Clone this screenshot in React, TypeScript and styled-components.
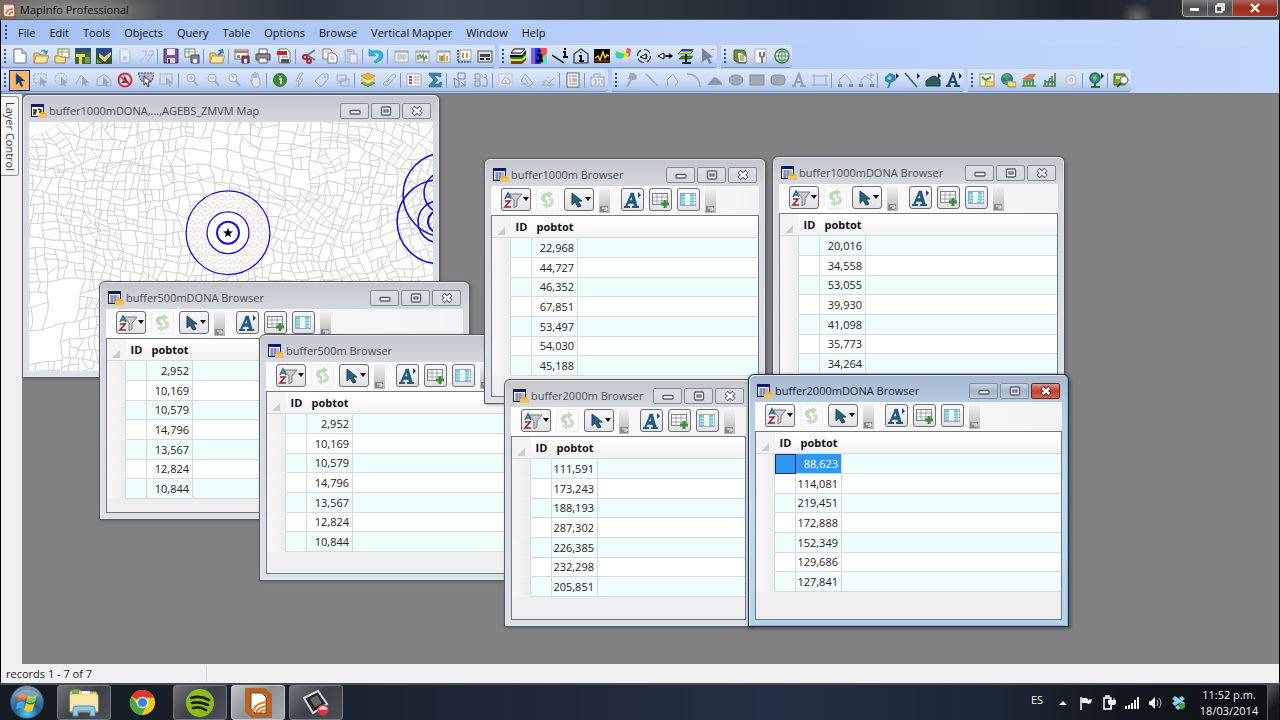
import React from "react";
import styled, { createGlobalStyle, css } from "styled-components";

const GlobalStyle = createGlobalStyle`
  * { box-sizing: border-box; }
  html, body { margin: 0; padding: 0; background: #000; }
  body, button { font-family: "Open Sans", "Noto Sans", sans-serif; font-size: 11px; line-height: 16px; }
  button { margin: 0; padding: 0; border: 0; background: none; color: inherit; }
  svg { display: block; flex: none; }
`;

/* ---------- icons ---------- */

const G = "#9fa8b8";
const doc = <path d="M3 1h7l3 3v11H3z" fill="#fff" stroke="#8a8f98" />;
const folder = (
  <>
    <path d="M1 5h5l1 2h7v8H1z" fill="#e8c766" stroke="#b08d35" />
    <path d="M3 8h13l-3 7H1z" fill="#fbe9a5" stroke="#b9993f" />
  </>
);
const ghost = (d: string) => <path d={d} fill="none" stroke={G} />;
const pointer = (c: string) => <path d="M7 5v9l2-2 2 3 1-1-1-3h3z" fill={c} />;
const lens = (
  <>
    <circle cx="7" cy="6" r="4" fill="#e4ebf7" stroke={G} />
    <path d="M10 9l4 5" stroke={G} strokeWidth="2" />
  </>
);
const sheet = (
  <>
    <rect x="2" y="3" width="13" height="11" fill="#fff" stroke="#9aa3b0" />
    <path d="M2 4h13" stroke="#6f86ad" />
  </>
);
const flyout = <path d="M13 1v6l3-3z" fill="#12205c" />;

const icons: Record<string, React.ReactNode> = {
  new: <><path d="M2 1h8l4 4v10H2z" fill="#fff" stroke="#6d7178" /><path d="M10 1v4h4" fill="#dfe3ea" stroke="#6d7178" /></>,
  open: <>{folder}<path d="M8 3q3-3 5 0l2-1-1 4-4-1 2-1q-2-2-4 0z" fill="#2e8bd0" /></>,
  openTable: <><rect x="4" y="1" width="11" height="9" fill="#f4f6e8" stroke="#7b8a55" /><path d="M4 4h11M8 1v9" stroke="#8fa864" /><path d="M1 8h5l1 1h5l-1 6H1z" fill="#f3dc84" stroke="#a58a36" /></>,
  mapGreen: <><rect width="16" height="16" fill="#3b6b35" /><path d="M0 0h16v4H0z" fill="#2b4f86" /><path d="M1 6h9v3H7v7H4V9H1z" fill="#e8da5d" /><path d="M10 9h5v6h-5z" fill="#7d9c46" /></>,
  mapEarth: <><rect width="16" height="16" fill="#31543a" /><path d="M0 0h16v5L8 9 0 5z" fill="#2b4a86" /><path d="M3 5l5 4 7-5v3l-6 7-6-5z" fill="#dfd07c" /><path d="M1 11l5 4H1z" fill="#79a14a" /></>,
  ghostDoc: <g opacity=".4">{doc}<circle cx="8" cy="10" r="2" fill={G} /></g>,
  ghostTools: <g opacity=".7">{ghost("M2 14l6-7M9 14l5-7M4 3h4v4M11 3h4v4H9")}</g>,
  save: <><path d="M1 1h14v14H1z" fill="#7d5596" stroke="#4e2f66" /><rect x="4" y="1" width="8" height="6" fill="#f2f0f6" /><rect x="4" y="10" width="8" height="5" fill="#d9d2e2" /><rect x="5" y="11" width="2" height="4" fill="#4e2f66" /></>,
  saveTable: <><rect x="1" y="1" width="10" height="8" fill="#fff" stroke="#757d8c" /><path d="M1 4h10M5 1v8" stroke="#85a15e" /><path d="M7 7h8v8H7z" fill="#7b8292" stroke="#444b5b" /><rect x="9" y="11" width="4" height="4" fill="#fff" /></>,
  close: <>{folder}<path d="M9 2l5-1 1 5-2-1-3 3-1-2 2-2z" fill="#2e7fc0" /></>,
  saveWin: <><rect x="1" y="2" width="13" height="9" fill="#fff" stroke="#666c78" /><path d="M1 4h13" stroke="#b3764b" strokeWidth="2" /><path d="M3 7h3v3H3z" fill="#7f9c5a" /><path d="M8 8h7v7H8z" fill="#8c3d62" stroke="#4b2440" /><rect x="10" y="11" width="3" height="4" fill="#fff" /></>,
  print: <><path d="M4 1h8v5H4z" fill="#fff" stroke="#555" /><path d="M1 6h14v6H1z" fill="#8a8e94" stroke="#3f4247" /><path d="M4 10h8v5H4z" fill="#fff" stroke="#555" /></>,
  pdf: <><path d="M3 1h8l3 3v11H3z" fill="#fff" stroke="#777" /><path d="M1 3h10v4H1z" fill="#c5262d" /><path d="M5 11h8v4H5z" fill="#555" /><path d="M6 9h6" stroke="#777" /></>,
  cut: <><path d="M5 8l9-6M6 7l8 5" stroke="#777" strokeWidth="2" /><circle cx="4" cy="9" r="2" fill="none" stroke="#a02830" strokeWidth="2" /><circle cx="8" cy="13" r="2" fill="none" stroke="#a02830" strokeWidth="2" /></>,
  copy: <><path d="M1 1h7l2 2v8H1z" fill="#fff" stroke="#777" /><path d="M6 5h6l3 3v7H6z" fill="#fff" stroke="#777" /><path d="M8 9h4M8 11h5M3 4h4" stroke="#aaa" /></>,
  paste: <g opacity=".75"><path d="M2 2h9v12H2z" fill="#c3c9d5" stroke={G} /><path d="M7 6h7v9H7z" fill="#f0f2f7" stroke={G} /><path d="M4 1h5v3H4z" fill={G} /></g>,
  undo: <path d="M1 1v7h7L5 5q7-1 6 3t-5 5l1 2q8-2 8-8T4 3z" fill="#2bb4e0" stroke="#1689b5" strokeWidth=".5" />,
  browser: <>{sheet}<path d="M4 7h9M4 9h9M4 11h9" stroke="#8f97a6" /></>,
  mapWin: <>{sheet}<path d="M4 12V8l2-1 1 3 2-3 1 5 2-4 1 3" fill="none" stroke="#5f9a50" strokeWidth="1.600" /></>,
  graph: <>{sheet}<path d="M5 13V7M9 13V6M12 13V8" stroke="#e2a251" strokeWidth="2" /><path d="M7 13V8" stroke="#6aa84c" strokeWidth="2" /></>,
  layout: <><path d="M2 2v12M2 14h13" stroke="#3f6fae" strokeDasharray="2 1" strokeWidth="2" /><rect x="4" y="2" width="11" height="10" fill="#fff" stroke="#8aa" /><path d="M7 5v5M11 5v5" stroke="#e29031" strokeWidth="2" /></>,
  redistrict: <><rect x="1" y="3" width="14" height="11" fill="#ddd" stroke="#555" /><path d="M3 6h10v3H3z" fill="#444" /><path d="M3 11h4M9 11h4" stroke="#222" strokeWidth="2" /></>,
  vmLayers: <><path d="M4 1h11l-4 4H1z" fill="#fff" stroke="#000" /><path d="M0 7h12l4-5v4l-4 4H0z" fill="#111" /><path d="M1 9h11l4-4v3l-4 3H1z" fill="#138a2e" /><path d="M0 11h12l4-4v3l-4 3H0z" fill="#f1e21c" /><path d="M1 13h11l4-3v2l-4 4H1z" fill="#7b3a18" /></>,
  vmInfo: <><rect width="5" height="16" fill="#8a5fd8" /><rect x="4" width="6" height="16" fill="#1836e8" /><path d="M9 0h7v8l-7 8z" fill="#f4505a" /><path d="M12 9l4-4v11h-6z" fill="#5fe2c0" /><path d="M7 3h3M6 7h4v6M5 13h7" stroke="#000" strokeWidth="2.4" fill="none" /></>,
  vmLine: <><path d="M0 7l12 8" stroke="#111" strokeWidth="1.5" /><path d="M12 1h2M11 4h2v5M11 9h5" stroke="#000" strokeWidth="2" fill="none" /></>,
  vmRegion: <><path d="M1 15V6l7-5 7 5v9z" fill="none" stroke="#333" strokeWidth="1.2" /><path d="M8 4v1M6 8h2v5M6 13h5" stroke="#000" strokeWidth="2" fill="none" /></>,
  vmProfile: <><rect y="1" width="16" height="14" fill="#0b0b0b" /><path d="M1 10l3-2 2 4 3-8 2 6 2-3 2 1" fill="none" stroke="#f2dd20" strokeWidth="1.4" /><path d="M1 13h14" stroke="#e33" /></>,
  vmRamp: <><path d="M12 0l4 1-1 7-5 1z" fill="#f25555" /><path d="M8 3l6 3-3 4-6-2z" fill="#f6e320" /><path d="M1 3l9 3-2 4-8-3z" fill="#45dd6b" /><path d="M1 6l7 3-1 2-6-1z" fill="#2ac9f0" /><path d="M5 11l8-1-1 4z" fill="#f0d0d8" /></>,
  vmRotate: <><circle cx="8" cy="8" r="6.5" fill="none" stroke="#333" strokeDasharray="7 3" strokeWidth="1.2" /><path d="M4 9l6-3v5zM10 6q2 2 0 5" fill="#fff" stroke="#111" /></>,
  vmView: <><path d="M1 8l6-3v6z" fill="#fff" stroke="#000" /><path d="M8 8h6" stroke="#000" strokeWidth="2" /><path d="M12 5l4 3-4 3z" fill="#000" /></>,
  vm3d: <><path d="M4 1h12l-4 4H1z" fill="#2741c8" /><path d="M3 3h12l-3 3H0z" fill="#d8e032" stroke="#111" strokeWidth=".5" /><path d="M4 8h11l-3 3H1z" fill="#189d3a" stroke="#111" strokeWidth=".5" /><path d="M8 6v8M4 15h9" stroke="#222" strokeWidth="2" /></>,
  vmSelect: <><path d="M3 0l11 9-4 1 3 5-3 1-2-5-5 3z" fill="#7c8394" /><path d="M12 2l3-1M1 13l3 2" stroke="#9aa" /></>,
  scroll: <><path d="M2 2h8q4 0 4 4v9H6l-4-3z" fill="#6b8b4a" stroke="#41602c" /><path d="M6 5h3l5 4v5H7z" fill="#f3eecb" /><path d="M8 8h4M8 10h4M8 12h4" stroke="#777" /></>,
  options: <><path d="M2 1h11v14H2z" fill="#fbfbfb" stroke="#a3abb8" /><path d="M7 4v4q2 2 4 0V4M9 8v7" stroke="#777" strokeWidth="2" fill="none" /></>,
  globe: <><circle cx="8" cy="8" r="7" fill="#eaf5ea" stroke="#4a7b5c" strokeWidth="1.5" /><path d="M1 8h14M8 1v14M3 4h10M3 12h10M8 1q-7 7 0 14M8 1q7 7 0 14" stroke="#4a8a5e" fill="none" /></>,
  select: <path d="M4 1v12l3-3 2 5 2-1-2-5h4z" fill="#1b3c6b" stroke="#46688c" strokeWidth=".5" />,
  marquee: <><rect x="1" y="2" width="12" height="9" fill="none" stroke={G} strokeDasharray="2 1" />{pointer(G)}</>,
  radius: <><circle cx="7" cy="7" r="6" fill="none" stroke={G} strokeDasharray="2 1" />{pointer(G)}</>,
  polySel: <>{ghost("M1 12l5-9 8 8")}{pointer(G)}</>,
  boundSel: <>{ghost("M1 13V7l7-5 7 6v6z")}{pointer(G)}</>,
  unselect: <><circle cx="8" cy="8" r="6.5" fill="#e9d5dc" stroke="#cf2f3b" strokeWidth="2" /><path d="M7 3v5l-3 3h8l-2-3z" fill="#3a3f4b" /><path d="M3 4l10 9" stroke="#cf2f3b" strokeWidth="1.6" /></>,
  invert: <><path d="M0 1h16l-2 8H3z" fill="#aeb3bd" stroke="#444" strokeDasharray="2 1" /><path d="M6 4v9l2-2 2 4 1-1-1-4h3z" fill="#fff" stroke="#333" /></>,
  graphSel: <g opacity=".8"><rect x="1" y="2" width="12" height="10" fill="#d6deec" stroke={G} />{pointer(G)}</g>,
  zoomIn: <>{lens}<path d="M5 6h4M7 4v4" stroke={G} /></>,
  zoomOut: <>{lens}<path d="M5 6h4" stroke={G} /></>,
  zoomQ: <>{lens}<path d="M6 5q1-2 2 0l-1 2" stroke={G} fill="none" /></>,
  pan: <path d="M3 8l2 1V3q1-2 2 0v3-5q1-1 2 0v5-4q1-1 2 0v4q2-1 2 1v5l-2 3H7z" fill="#dfe4ee" stroke={G} />,
  info: <><circle cx="8" cy="8" r="6.5" fill="#3c8a35" stroke="#3f6f3a" /><path d="M8 4v1M7 7h2v5" stroke="#fff" strokeWidth="1.6" fill="none" /></>,
  hotlink: <>{ghost("M10 1L6 7h4l-5 8 1-6H3l4-8z")}</>,
  label: <>{ghost("M1 9l7-7h6v5l-7 8z")}<circle cx="11" cy="5" r="1" fill={G} /></>,
  drag: <>{ghost("M2 3h9v6H2zM6 7h8v7H6zM2 12l3-2")}</>,
  layers: <><path d="M1 11l7-3 7 3-7 4z" fill="#7cae3d" stroke="#4d7c26" strokeWidth=".6" /><path d="M1 8l7-3 7 3-7 4z" fill="#f3e9a0" stroke="#b7a14a" strokeWidth=".6" /><path d="M1 4l7-3 7 3-7 4z" fill="#f0b23a" stroke="#b47a1c" strokeWidth=".6" /></>,
  ruler: <>{ghost("M2 12L11 3q3-2 4 1L7 13q-3 2-5-1zM6 10l3-3")}</>,
  legend: <><rect x="1" y="2" width="14" height="12" fill="#fff" stroke="#a3abb8" /><path d="M3 5h3M3 8h3M3 11h3" stroke="#cf3a3a" strokeWidth="2" /><path d="M8 5h6M8 8h6M8 11h6" stroke="#999" /></>,
  sigma: <path d="M2 1h12v4h-2l-1-1H7l4 4-4 4h5l1-2h2l-1 5H2v-2l5-5-5-5z" fill="#3a86a4" stroke="#2b6480" strokeWidth=".5" />,
  target: <g stroke="#7f8796" fill="none"><path d="M6 1h7v6H6zM2 6l5 3v6H3zM9 10l4 4M13 9v5H9" /></g>,
  assign: <g stroke="#8a92a2" fill="none"><path d="M2 2h5v5H2zM2 9h5v5H2zM9 4l5 3v7H9M12 2l2 2-2 2" /></g>,
  clip: <><rect x="1" y="2" width="13" height="12" fill="#e3e9f3" stroke="#c3c9d6" />{ghost("M3 11l4-6 5 3v4zM7 8l2 4")}</>,
  clipOn: <>{ghost("M2 9l4-7 8 9-5 4zM6 6l3 6M2 12h5")}</>,
  nodes: <>{ghost("M1 13h14M3 13l3-5 3 3 5-5M3 9v2M8 5v1")}</>,
  list: <><rect x="2" y="1" width="12" height="14" fill="#fff" stroke="#5c626c" /><path d="M4 4h2M4 7h2M4 9h2M4 12h2M7 4h5M7 7h5M7 9h5M7 12h5" stroke="#6c727c" /></>,
  district: <><rect x="1" y="5" width="13" height="9" fill="#dde2ec" stroke={G} /><path d="M4 5V2h6v3M4 8h2v4H4M8 8h2M8 12h2M12 8v4" stroke={G} fill="none" /></>,
  symbol: <path d="M7 1h4l3 3-1 4H9l-4 7-2-1 4-7H5z" fill={G} />,
  line: <path d="M2 2l12 12" stroke={G} strokeWidth="1.6" />,
  polyline: <>{ghost("M3 14l-1-6 6-6 5 8-3 4")}</>,
  arc: <path d="M1 2q12 0 13 13" fill="none" stroke={G} strokeWidth="1.6" />,
  polygon: <path d="M1 12l6-7 3 1 5 5v2H1z" fill="#9299a6" />,
  ellipse: <ellipse cx="8" cy="8" rx="7" ry="5" fill="#a3a9b5" stroke="#878e9b" />,
  rect: <rect x="1" y="3" width="14" height="10" fill="#a3a9b5" stroke="#878e9b" />,
  rrect: <rect x="1" y="3" width="14" height="10" rx="4" fill="#a3a9b5" stroke="#878e9b" />,
  text: <path d="M1 14h4M9 14h6M3 14L8 2l4 12M5 10h5" stroke="#97a0af" strokeWidth="2" fill="none" />,
  frame: <>{ghost("M2 2v12M14 2v12M0 4h16M0 13h16")}</>,
  reshape: <>{ghost("M3 13L2 8l6-6 6 7v4")}<path d="M1 12h4v3H1zM12 12h4v3h-4z" fill="#8f8a84" /></>,
  addNode: <>{ghost("M3 13L3 8l4-4 7 5v4M9 3h7M13 1v5")}<path d="M1 12h4v3H1zM12 12h4v3h-4z" fill="#8f8a84" /></>,
  symStyle: <><path d="M2 5l5-4 5 2 1 5-5 3-2 5H4l2-5-4-2z" fill="#2f86a5" /><path d="M4 6q3-4 5 0-3 4-5 0" fill="#8fd0e2" />{flyout}</>,
  lineStyle: <><path d="M1 1l12 14" stroke="#45627a" strokeWidth="1.8" />{flyout}</>,
  regStyle: <><path d="M1 9l5-4 4-1 5 4v6H1z" fill="#2d5f57" stroke="#1c403e" />{flyout}</>,
  textStyle: <><path d="M0 14h5M8 14h6M2 14L7 2l4 12M4 10h6" stroke="#1d4d66" strokeWidth="2.2" fill="none" />{flyout}</>,
  wms: <><rect x="1" y="2" width="14" height="12" fill="#f3f4dc" stroke="#8ca07a" /><path d="M3 5l4 3 5-3" stroke="#3c8a35" strokeWidth="2" fill="none" /><path d="M6 9h3l1 1h5v4H7z" fill="#f0d968" stroke="#b8a040" /></>,
  wfs: <><circle cx="7" cy="7" r="6" fill="#2c77b8" /><path d="M2 4q5-5 9 0l-4 4zM3 9l5 1-2 3z" fill="#56a83a" /><path d="M7 9h4l1 1h4v5H8z" fill="#f0e27a" stroke="#8f8a3c" /></>,
  universe: <><path d="M1 7l7-5h7l-4 6H4z" fill="#d9794d" /><path d="M3 9v5M6 9v5M9 9v5M12 7v7M1 14h14M2 9h11" stroke="#4a8a42" strokeWidth="1.6" /></>,
  grid3: <path d="M1 14h13M3 13V8M6 13l2-7M10 13V4M13 13V1M3 10h10" stroke="#4f7a45" strokeWidth="1.6" fill="none" />,
  gear: <><circle cx="8" cy="8" r="5" fill="#e9edf4" stroke="#c2c9d6" strokeWidth="2" /><circle cx="8" cy="8" r="2" fill="#fff" stroke={G} /></>,
  geoGlobe: <><circle cx="7" cy="6" r="5" fill="#2c88ac" stroke="#2c6b5c" strokeWidth="1.5" /><path d="M4 4l4-1 1 4-3 2z" fill="#7dc04a" /><path d="M7 11v3M3 15h9" stroke="#2c6b2c" strokeWidth="2" />{flyout}</>,
  findMap: <><path d="M1 2h11v11H1z" fill="#7aa53a" stroke="#42641f" /><path d="M3 4h7v3H3z" fill="#dfe9a5" /><circle cx="11" cy="8" r="4" fill="#f1f1ea" stroke="#666" /><path d="M8 11l-4 4" stroke="#444" strokeWidth="2" /></>,
};

const Icon = ({ name }: { name: string }) => (
  <svg width="16" height="16" viewBox="0 0 16 16" aria-hidden="true">{icons[name]}</svg>
);

/* ---------- application frame ---------- */

const Shell = styled.div`
  display: flex;
  flex-direction: column;
  min-height: 100vh;
  overflow: hidden;
  padding: 0 1px;
`;

const TitleBar = styled.header`
  display: flex;
  align-items: flex-start;
  justify-content: space-between;
  height: 20px;
  margin: 0 -1px;
  border-bottom: 1px solid #4d545e;
  background:
    radial-gradient(ellipse 90px 24px at 70px 12px, rgba(150, 147, 144, 0.9), rgba(130, 128, 126, 0.6) 60%, transparent),
    radial-gradient(circle 16px at 1137px 18px, #6f6a66, transparent),
    linear-gradient(90deg, #6a6764, #4b4e53 12%, #2b333e 24%, #3b444e 34%, #28303a 55%, #1d2531 66%, #2f353d 76%, #1c222c 84%, #3a3c40);
`;

const AppName = styled.div`
  display: flex;
  align-items: center;
  gap: 4px;
  padding: 2px 0 0 2px;
  color: #0c0c0e;
  text-shadow: 0 0 6px rgba(190, 186, 180, 0.9);
`;

const FrameButtons = styled.div`
  display: flex;
  margin-right: 2px;
  border: 1px solid #a9abae;
  border-top: 0;
  border-radius: 0 0 4px 4px;
  overflow: hidden;
`;

const FrameButton = styled.button<{ $danger?: boolean }>`
  display: grid;
  place-items: center;
  width: ${(p) => (p.$danger ? 44 : 25)}px;
  height: 16px;
  border-right: ${(p) => (p.$danger ? 0 : 1)}px solid #8d8f92;
  background: ${(p) => (p.$danger ? "linear-gradient(#a8665c, #9c2a1c 50%, #a93a28)" : "linear-gradient(#7b7c7e, #4a4b4e 50%, #5f6063)")};
`;

const MenuBar = styled.nav`
  display: flex;
  align-items: center;
  height: 25px;
  padding: 0 0 0 4px;
  gap: 2px;
  background: linear-gradient(90deg, #a5c0f2, #b4ccf8 40%, #c4d8fb);
`;

const MenuItem = styled.button`
  padding: 0 6px;
  color: #0c1220;
`;

const ToolArea = styled.div`
  background: linear-gradient(90deg, #a8c1f0, #b6cdf8 50%, #c3d7fb);
  border-bottom: 1px solid #6b7686;
`;

const ToolRow = styled.div`
  display: flex;
  height: 24px;
  gap: 4px;
`;

const ToolGroup = styled.div`
  display: flex;
  align-items: center;
  height: 23px;
  padding: 0 0 0 3px;
  border-radius: 0 3px 3px 0;
  border-bottom: 1px solid #7e95c2;
  background: linear-gradient(#dbe7fb, #cddcf7 55%, #aac1ea);
`;

const Grip = styled.span`
  width: 2px;
  height: 15px;
  margin-right: 3px;
  background: repeating-linear-gradient(#2c4a86 0 2px, transparent 2px 4px);
`;

const ToolButton = styled.button<{ $active?: boolean }>`
  display: grid;
  place-items: center;
  width: 21px;
  height: 21px;
  ${(p) => p.$active && css`
    border: 1px solid #1b2a66;
    background: #fbb765;
  `}
`;

const ToolSep = styled.span`
  width: 1px;
  height: 15px;
  margin: 0 2px 0 1px;
  background: #7d97ca;
`;

const toolRows: string[][] = [
  [
    "new open openTable mapGreen mapEarth ghostDoc ghostTools | save saveTable | close | saveWin print pdf | cut copy paste | undo | browser mapWin graph layout redistrict",
    "vmLayers vmInfo vmLine vmRegion vmProfile vmRamp vmRotate vmView vm3d vmSelect",
    "scroll options globe",
  ],
  [
    "select marquee radius polySel boundSel unselect invert graphSel | zoomIn zoomOut zoomQ pan | info hotlink label drag | layers ruler | legend sigma | target assign | clip clipOn nodes | list | district",
    "symbol line polyline arc polygon ellipse rect rrect text frame | reshape addNode | symStyle lineStyle regStyle textStyle",
    "wms wfs universe grid3 gear | geoGlobe | findMap",
  ],
];

const menus = ["File", "Edit", "Tools", "Objects", "Query", "Table", "Options", "Browse", "Vertical Mapper", "Window", "Help"];

const Body = styled.main`
  display: flex;
  flex: 1;
  min-height: 570px;
`;

const SideStrip = styled.aside`
  width: 21px;
  flex: none;
  padding-top: 2px;
  background: #f0f0f0;
`;

const SideTab = styled.button`
  width: 18px;
  height: 80px;
  border: 1px solid #8d8f94;
  border-left: 0;
  border-radius: 0 3px 3px 0;
  background: #f6f6f6;
  color: #3b3d42;
  writing-mode: vertical-rl;
`;

const Workspace = styled.section`
  position: relative;
  flex: 1;
  overflow: hidden;
  background: #808183;
`;

/* ---------- document windows ---------- */

interface Place { x: number; y: number; w: number; h: number }

const Win = styled.article<{ $at: Place; $active?: boolean }>`
  position: absolute;
  left: ${(p) => p.$at.x}px;
  top: ${(p) => p.$at.y}px;
  width: ${(p) => p.$at.w}px;
  height: ${(p) => p.$at.h}px;
  display: flex;
  flex-direction: column;
  padding: 0 6px 6px;
  border: 1px solid ${(p) => (p.$active ? "#20303e" : "#55585e")};
  border-radius: 6px 6px 0 0;
  background: ${(p) => p.$active
    ? "linear-gradient(#a9b9cd, #b6cbe2 28px, #c3dcf2 50%, #b4d3ea)"
    : "linear-gradient(#c4c6cc, #d6d9e0 28px, #dae2ec)"};
  box-shadow: ${(p) => (p.$active
    ? "inset 1px 1px 0 #e3eef8, inset -1px -1px 0 #6fc0dc, 1px 1px 3px 1px rgba(40, 42, 45, 0.5)"
    : "inset 0 0 0 1px #e4e7ec, 1px 1px 3px rgba(50, 52, 55, 0.4)")};
`;

const WinTitle = styled.header`
  display: flex;
  align-items: center;
  flex: none;
  height: 27px;
  padding: 4px 2px 0 2px;
  gap: 2px;
`;

const WinName = styled.h2<{ $active?: boolean }>`
  flex: 1;
  margin: 0;
  font-size: 11px;
  line-height: 16px;
  font-weight: 400;
  white-space: nowrap;
  color: ${(p) => (p.$active ? "#1d2632" : "#4a4f58")};
`;

const WinButtons = styled.div`
  display: flex;
  gap: 2px;
`;

const WinButton = styled.button<{ $tone: "plain" | "active" | "danger" }>`
  display: grid;
  place-items: center;
  width: 29px;
  height: 16px;
  border: 1px solid ${(p) => (p.$tone === "danger" ? "#5e2620" : "#858b95")};
  border-radius: 2px;
  background: ${(p) =>
    p.$tone === "danger"
      ? "linear-gradient(#d99a8f, #c2402c 50%, #cf6650)"
      : p.$tone === "active"
      ? "linear-gradient(#c9d6e6, #a4b6cb 50%, #b9cbdd)"
      : "linear-gradient(#dcdfe5, #d3d7de)"};
`;

const WinTools = styled.div`
  display: flex;
  align-items: flex-start;
  flex: none;
  height: 29px;
  padding: 2px 0 0 10px;
  background: linear-gradient(90deg, #fcfcfc, #f3f3f4);
`;

const BarButton = styled.button<{ $wide?: boolean; $off?: boolean }>`
  display: flex;
  align-items: center;
  justify-content: center;
  width: ${(p) => (p.$wide ? 30 : 23)}px;
  height: 23px;
  margin-right: 5px;
  border: 1px solid ${(p) => (p.$off ? "#efefef" : "#6c6e72")};
  border-radius: 3px;
  background: ${(p) => (p.$off ? "#f9f9f9" : "linear-gradient(#f7f7f7, #e2e2e3)")};
`;

const Overflow = styled.button`
  display: flex;
  align-items: flex-end;
  justify-content: center;
  width: 11px;
  height: 25px;
  margin-right: 11px;
  background: linear-gradient(#f3f3f3, #b4b5b7);
`;

const Pane = styled.div`
  flex: 1;
  min-height: 0;
  overflow: hidden;
  border: 1px solid #72777f;
  background: #efefef;
`;

const MapPane = styled.div`
  flex: 1;
  min-height: 0;
  overflow: hidden;
  background: #fff;
`;

const Grid = styled.table`
  width: 100%;
  table-layout: fixed;
  border-collapse: separate;
  border-spacing: 0;
  color: #1f2124;
`;

const HeadCell = styled.th`
  height: 22px;
  padding: 1px 0 0;
  border-bottom: 1px solid #d5dbdd;
  background: linear-gradient(#fff, #f2f2f3);
  color: #101114;
  line-height: 16px;
  font-weight: 700;
  text-align: center;
`;

const Corner = styled(HeadCell)`
  background: #f3f3f3;
  vertical-align: bottom;
`;

const Row = styled.tr`
  height: 20px;
  background: #fff;
  &:nth-child(3n) { height: 19px; }
  &:nth-child(odd) { background: #effdfd; }
`;

const Cell = styled.td<{ $picked?: boolean; $focus?: boolean }>`
  padding: 0 3px 0 0;
  border-right: 1px solid #d3d9dc;
  border-bottom: 1px solid #d3d9dc;
  line-height: 16px;
  text-align: right;
  white-space: nowrap;
  &:last-child { border-right: 0; }
  ${(p) => p.$picked && css`
    background: #3196f4;
    color: #fff;
  `}
  ${(p) => p.$focus && css`
    border: 1px solid #16335c;
  `}
`;

const RowHead = styled(Cell)`
  background: linear-gradient(90deg, #f7f7f7, #ededee);
  border-bottom-color: #f3f3f3;
`;

const WindowIcon = ({ map }: { map?: boolean }) => (
  <svg width="16" height="16" viewBox="0 0 16 16" aria-hidden="true">
    <rect x="0.5" y="1.5" width="12" height="12" fill="#fff" stroke="#1a1f35" />
    <rect x="0" y="1" width="13" height="3" fill="#10186a" />
    {map ? (
      <path d="M2 7h3v2H3v2h2M7 6l3 1v3M8 9h3" fill="none" stroke="#222" strokeWidth="1.5" />
    ) : (
      <path d="M2 6h9M2 8h9M2 10h9M2 12h5M4 5v8M7 5v8" stroke="#5a6ca5" />
    )}
    <path d="M7 12l4-4 5 3v4H7z" fill="#f3a921" />
    <path d="M7 12h9M7 14h9" stroke="#fbdc85" />
  </svg>
);

const MinGlyph = ({ c }: { c: string }) => (
  <svg width="14" height="12" viewBox="0 0 14 12"><rect x="2" y="5.500" width="10" height="3.500" rx="1" fill="#fff" stroke={c} strokeWidth="1.300" /></svg>
);
const MaxGlyph = ({ c }: { c: string }) => (
  <svg width="14" height="12" viewBox="0 0 14 12"><rect x="2.500" y="2" width="9" height="8" rx="1" fill="#fff" stroke={c} strokeWidth="1.300" /><rect x="5" y="5" width="4" height="2" fill="#fff" stroke={c} strokeWidth="1.300" /></svg>
);
const CloseGlyph = ({ c }: { c: string }) => (
  <svg width="14" height="12" viewBox="0 0 14 12">
    <path d="M3 2.500l8 7M11 2.500l-8 7" stroke={c} strokeWidth="4.600" />
    <path d="M3.500 3l7 6M10.500 3l-7 6" stroke="#fff" strokeWidth="2.400" />
  </svg>
);

const WinHeader = ({ title, map, active }: { title: string; map?: boolean; active?: boolean }) => {
  const tone = active ? "active" : "plain";
  return (
    <WinTitle>
      <WindowIcon map={map} />
      <WinName $active={active}>{title}</WinName>
      <WinButtons>
        <WinButton $tone={tone} aria-label="Minimize"><MinGlyph c="#595f69" /></WinButton>
        <WinButton $tone={tone} aria-label="Maximize"><MaxGlyph c="#595f69" /></WinButton>
        <WinButton $tone={active ? "danger" : "plain"} aria-label="Close"><CloseGlyph c={active ? "#6b2a22" : "#595f69"} /></WinButton>
      </WinButtons>
    </WinTitle>
  );
};

const Caret = () => (
  <svg width="6" height="12" viewBox="0 0 6 12" aria-hidden="true"><path d="M0 3h6L3 7z" fill="#111" /></svg>
);

const OverflowMark = () => (
  <svg width="9" height="8" viewBox="0 0 9 8" aria-hidden="true"><path d="M0 1h8v5l-2 1H0z" fill="#85878a" /><path d="M2 3h5v2H4" fill="none" stroke="#fff" /></svg>
);

const BrowserTools = () => (
  <WinTools>
    <BarButton $wide aria-label="Sort and filter">
      <svg width="20" height="18" viewBox="0 0 20 18" aria-hidden="true">
        <path d="M6 3h13l-5 6v6l-3 2V9z" fill="#c9ccd0" stroke="#7a7d82" />
        <path d="M2 8l3-6 3 6M3 6h4" fill="none" stroke="#27667e" strokeWidth="1.500" />
        <path d="M2 10h5l-5 6h6" fill="none" stroke="#8e2a3a" strokeWidth="1.600" />
      </svg>
      <Caret />
    </BarButton>
    <BarButton $off disabled aria-label="Refresh">
      <svg width="17" height="18" viewBox="0 0 17 18" aria-hidden="true">
        <path d="M9 0v2q-7 0-7 5 0 4 6 5V9Q5 8 6 6l3-1v2l5-4z" fill="#bcd8b4" />
        <path d="M8 18v-2q7 0 7-5 0-4-5-5v3q3 1 1 3l-3 1v-2l-5 3z" fill="#cbdcc6" />
      </svg>
    </BarButton>
    <BarButton $wide aria-label="Select">
      <svg width="18" height="18" viewBox="0 0 18 18" aria-hidden="true">
        <path d="M5 2v12l3-3 3 5 3-1-3-5h4z" fill="#2b6076" stroke="#1a3f66" />
      </svg>
      <Caret />
    </BarButton>
    <Overflow aria-label="More"><OverflowMark /></Overflow>
    <BarButton aria-label="Text style">
      <svg width="19" height="18" viewBox="0 0 19 18" aria-hidden="true">
        <path d="M1 16h6M9 16h7M3 16L9 2" fill="none" stroke="#1f5c7e" strokeWidth="2" />
        <path d="M9 2l4 14M5 11h6" fill="none" stroke="#1f5c7e" strokeWidth="3.400" />
        <path d="M15 1v6l3-3z" fill="#1d3fa8" />
      </svg>
    </BarButton>
    <BarButton aria-label="Add row">
      <svg width="19" height="18" viewBox="0 0 19 18" aria-hidden="true">
        <rect x="1.500" y="2.500" width="15" height="11" fill="#fff" stroke="#77808a" />
        <path d="M2 6h15M2 10h15M6 3v11M11 3v11" stroke="#97a3a9" />
        <path d="M14 9v8M10 13h8" stroke="#3f8a3b" strokeWidth="3" />
      </svg>
    </BarButton>
    <BarButton aria-label="Pick fields">
      <svg width="19" height="18" viewBox="0 0 19 18" aria-hidden="true">
        <rect x="1.500" y="2.500" width="15" height="12" fill="#fff" stroke="#97a9b4" />
        <path d="M2 3h4v11H2zM11 3h4v11h-4z" fill="#6fc7dd" />
        <path d="M2 6h15M2 9h15M2 12h15" stroke="#d5e8ee" />
      </svg>
    </BarButton>
    <Overflow aria-label="More"><OverflowMark /></Overflow>
  </WinTools>
);

const MarkCol = styled.col`width: 19px;`;
const IdCol = styled.col`width: 21px;`;
const ValueCol = styled.col`width: 46px;`;

const BrowserWindow = ({ title, at, values, active }: { title: string; at: Place; values: string[]; active?: boolean }) => (
  <Win $at={at} $active={active}>
    <WinHeader title={title} active={active} />
    <BrowserTools />
    <Pane>
      <Grid>
        <colgroup>
          <MarkCol />
          <IdCol />
          <ValueCol />
          <col />
        </colgroup>
        <thead>
          <tr>
            <Corner aria-label="Rows">
              <svg width="16" height="12" viewBox="0 0 16 12"><path d="M13 2v8H5z" fill="#cbccce" /></svg>
            </Corner>
            <HeadCell>ID</HeadCell>
            <HeadCell>pobtot</HeadCell>
            <HeadCell />
          </tr>
        </thead>
        <tbody>
          {values.map((v, i) => (
            <Row key={v}>
              <RowHead />
              <Cell $picked={active && i === 0} $focus={active && i === 0} />
              <Cell $picked={active && i === 0}>{v}</Cell>
              <Cell />
            </Row>
          ))}
        </tbody>
      </Grid>
    </Pane>
  </Win>
);

/* ---------- street map ---------- */

type Pt = [number, number];

const random = (seed: number) => () => {
  seed = (seed * 1664525 + 1013904223) % 4294967296;
  return seed / 4294967296;
};

const area = (p: Pt[]) =>
  Math.abs(p.reduce((s, [x, y], i) => {
    const [nx, ny] = p[(i + 1) % p.length];
    return s + x * ny - nx * y;
  }, 0)) / 2;

const split = (p: Pt[], c: Pt, a: number): [Pt[], Pt[]] => {
  const side = (q: Pt) => (q[0] - c[0]) * Math.sin(a) - (q[1] - c[1]) * Math.cos(a);
  const left: Pt[] = [];
  const right: Pt[] = [];
  p.forEach((q, i) => {
    const n = p[(i + 1) % p.length];
    const s = side(q);
    const t = side(n);
    (s >= 0 ? left : right).push(q);
    if (s >= 0 !== t >= 0) {
      const k = s / (s - t);
      const m: Pt = [q[0] + (n[0] - q[0]) * k, q[1] + (n[1] - q[1]) * k];
      left.push(m);
      right.push(m);
    }
  });
  return [left, right];
};

/* Gentle bends, so that long streets curve as they do in an old city. */
const bend = ([x, y]: Pt): string => {
  const bx = x + 5 * Math.sin(y / 23 + x / 60) + 1.2 * Math.sin(y / 5 + x / 7);
  const by = y + 5 * Math.sin(x / 31 - y / 50) + 1.2 * Math.sin(x / 6 - y / 8);
  return `${bx.toFixed(1)} ${by.toFixed(1)}`;
};

const outline = (p: Pt[]) => {
  const pts: string[] = [];
  p.forEach((q, i) => {
    const n = p[(i + 1) % p.length];
    const steps = Math.max(1, Math.round(Math.hypot(n[0] - q[0], n[1] - q[1]) / 8));
    for (let k = 0; k < steps; k++) pts.push(bend([q[0] + ((n[0] - q[0]) * k) / steps, q[1] + ((n[1] - q[1]) * k) / steps]));
  });
  return "M" + pts.join("L") + "Z";
};

/* City blocks: every district is cut again and again across its longest side. */
const streets = (() => {
  const rnd = random(4211);
  const out: string[] = [];
  const cut = (p: Pt[], depth: number) => {
    const cx = p.reduce((s, q) => s + q[0], 0) / p.length;
    const cy = p.reduce((s, q) => s + q[1], 0) / p.length;
    const target = cx < 52 && cy > 175 && cy < 225 ? 1600 : cx > 170 && cx < 270 && cy < 60 ? 260 : 120;
    if (depth > 13 || area(p) < target * (0.4 + rnd() * 1.7)) {
      out.push(outline(p));
      return;
    }
    let best = 0;
    let angle = 0;
    p.forEach((q, i) => {
      const n = p[(i + 1) % p.length];
      const d = Math.hypot(n[0] - q[0], n[1] - q[1]);
      if (d > best) {
        best = d;
        angle = Math.atan2(n[1] - q[1], n[0] - q[0]);
      }
    });
    const wobble = (rnd() - 0.5) * (depth < 4 ? 0.8 : rnd() < 0.15 ? 1 : 0.06);
    const [l, r] = split(p, [cx + (rnd() - 0.5) * 4, cy + (rnd() - 0.5) * 4], angle + Math.PI / 2 + wobble);
    if (l.length < 3 || r.length < 3) return;
    cut(l, depth + 1);
    cut(r, depth + 1);
  };
  cut([[-20, 30], [120, -60], [440, 10], [430, 270], [180, 300], [-20, 270]], 0);
  return out.join("");
})();

const avenues =
  "M107 0l8 40 3 60 2 60-4 70M128 0l12 40 8 20M60 170q10-60 15-118 15-14 40-8l90 22q60 20 90 10M0 42l50 10 60-16M222 0v24q30 14 70-8 40-6 80 20M330 60l-50 130M405 60l-60 100";

const StreetMap = () => (
  <svg width="100%" height="100%" viewBox="0 0 405 250" preserveAspectRatio="xMinYMin slice" role="img" aria-label="Map of census areas with buffers">
    <defs>
      <pattern id="hatch" width="8" height="8" patternUnits="userSpaceOnUse">
        <path d="M0 1l2 1M4 4l2-1" stroke="#d98f8f" strokeWidth="0.8" />
        <path d="M1 6l2-1M6 7l1-2" stroke="#c9a9d0" strokeWidth="0.8" />
      </pattern>
    </defs>
    <g fill="none" stroke="#c4c4c4" strokeWidth="0.500">
      <path d={streets} />
      <path d={avenues} stroke="#b4b4b4" />
    </g>
    <circle cx="199.500" cy="111" r="42" fill="#fff" fillOpacity="0.75" />
    <circle cx="199.500" cy="111" r="42" fill="url(#hatch)" />
    <circle cx="199.500" cy="111" r="21" fill="#fff" />
    <g fill="none" stroke="#1a12d2" strokeWidth="1.600">
      <circle cx="199.500" cy="111" r="42" strokeWidth="1.300" />
      <circle cx="199.500" cy="111" r="21" strokeWidth="1.300" />
      <circle cx="199.500" cy="111" r="11" strokeWidth="2" />
      <circle cx="417" cy="73" r="42" />
      <circle cx="417" cy="71" r="21" />
      <circle cx="411" cy="100" r="42" />
      <circle cx="411" cy="100" r="21" />
      <circle cx="411" cy="100" r="11" strokeWidth="2" />
    </g>
    <path d="M199.500 106l1.300 3.500 3.700.2-2.900 2.300 1 3.600-3.100-2-3.100 2 1-3.600-2.900-2.300 3.700-.2z" fill="#000" />
  </svg>
);

/* ---------- status bar and taskbar ---------- */

const StatusBar = styled.footer`
  display: flex;
  align-items: center;
  height: 19px;
  padding-left: 5px;
  background: #f0f0f0;
  color: #1b1c1e;
`;

const StatusText = styled.span`
  width: 201px;
  border-right: 1px solid #dcdcdc;
`;

const Taskbar = styled.footer`
  display: flex;
  align-items: center;
  height: 37px;
  margin: 0 -1px;
  border-top: 2px solid #4b4d50;
  background: linear-gradient(90deg, #151a22, #1c2431 30%, #232f42 60%, #1c2735 78%, #13161c 88%, #0e1014);
  color: #f2f2f2;
`;

const StartButton = styled.button`
  display: grid;
  place-items: center;
  width: 53px;
  height: 35px;
  margin-right: 4px;
`;

const TaskButton = styled.button<{ $look: "bare" | "open" | "front" }>`
  display: grid;
  place-items: center;
  width: 54px;
  height: 35px;
  margin-right: 4px;
  border: 1px solid ${(p) => (p.$look === "bare" ? "transparent" : p.$look === "front" ? "#c4c6c8" : "#76797d")};
  border-radius: 3px;
  background: ${(p) =>
    p.$look === "bare"
      ? "none"
      : p.$look === "front"
      ? "linear-gradient(135deg, #c3c5c6, #8c9094 50%, #a7aaad)"
      : "linear-gradient(135deg, #717377, #3d4148 50%, #4d5157)"};
`;

const Tray = styled.div`
  display: flex;
  align-items: center;
  gap: 7px;
  height: 35px;
  margin-left: auto;
`;

const TrayButton = styled.button`
  display: grid;
  place-items: center;
  width: 16px;
  height: 20px;
`;

const Language = styled.button`
  width: 16px;
  margin: 0 3px 6px 0;
`;

const Clock = styled.time`
  display: block;
  width: 72px;
  line-height: 16px;
  text-align: center;
  white-space: nowrap;
`;

const ShowDesktop = styled.button`
  width: 12px;
  height: 35px;
  margin: 0 1px 0 -5px;
  border-left: 1px solid #5d6065;
  background: linear-gradient(135deg, #55585c, #15171b 60%);
`;

const taskIcons = {
  start: (
    <svg width="36" height="35" viewBox="0 0 36 35">
      <defs>
        <radialGradient id="orb" cx="50%" cy="85%" r="80%">
          <stop offset="0" stopColor="#4fd0f5" /><stop offset="0.45" stopColor="#1d5f9b" /><stop offset="1" stopColor="#7f97a8" />
        </radialGradient>
      </defs>
      <circle cx="18" cy="17" r="16.500" fill="url(#orb)" stroke="#2a4560" />
      <path d="M10 10q4-3 8 0l-2 6q-4-2-8 1z" fill="#e8622c" />
      <path d="M19 10q4 3 9 0l-2 7q-5 2-9 0z" fill="#8cc63f" />
      <path d="M8 18q4-3 8-1l-2 7q-3-2-7 0z" fill="#3fa9ee" />
      <path d="M17 18q4 3 9 0l-3 8q-4 2-8-1z" fill="#fbc926" />
      <path d="M5 11q13-13 26 0-13 5-26 0" fill="#fff" opacity=".25" />
    </svg>
  ),
  explorer: (
    <svg width="32" height="30" viewBox="0 0 32 30">
      <path d="M2 4l3-2h7l2 2h14l2 3v17H2z" fill="#e9d283" stroke="#b39a4b" />
      <path d="M4 2h7v4H4z" fill="#6fae4c" /><path d="M14 3h8v3h-8z" fill="#fff" />
      <path d="M2 7h28v16H2z" fill="#f6e8a8" />
      <path d="M5 28V21q0-3 3-3h16q3 0 3 3v7h-5v-5H10v5z" fill="#8fc7ea" stroke="#4c8fc2" />
    </svg>
  ),
  chrome: (
    <svg width="27" height="27" viewBox="0 0 28 28">
      <circle cx="14" cy="14" r="13" fill="#f4c81f" />
      <path d="M14 14L2.700 7.500A13 13 0 0 1 25.900 9H14z" fill="#d93a2b" />
      <path d="M2.700 7.500A13 13 0 0 0 13 27l5.500-10L14 14 8.500 16z" fill="#4aa54a" />
      <circle cx="14" cy="14" r="6" fill="#fff" /><circle cx="14" cy="14" r="4.700" fill="#3d7fd9" />
    </svg>
  ),
  music: (
    <svg width="30" height="30" viewBox="0 0 30 30">
      <circle cx="15" cy="15" r="14" fill="#8fb91c" />
      <path d="M6 10q9-3 18 2M7 15q8-2 16 2M8 20q7-2 13 2" fill="none" stroke="#17200a" strokeWidth="2.600" strokeLinecap="round" />
    </svg>
  ),
  mapinfo: (
    <svg width="30" height="32" viewBox="0 0 30 32">
      <path d="M2 1h20l7 6v24H9l-7-6z" fill="#b5652a" />
      <path d="M8 6h11l4 4v16H12l-4-4z" fill="#fff" stroke="#7b4219" />
      <path d="M10 25q2-9 13-10M13 26q2-6 10-7M17 26q1-3 6-3" fill="none" stroke="#e07b2c" strokeWidth="2" />
    </svg>
  ),
  recorder: (
    <svg width="32" height="30" viewBox="0 0 32 30">
      <path d="M4 10L18 3l9 13-14 9z" fill="#23262a" stroke="#d6d8da" strokeWidth="2" />
      <path d="M10 11l7-4 5 8-7 4z" fill="#5d6a60" />
      <circle cx="23" cy="22" r="5.500" fill="#d23b44" /><path d="M18 21q5-6 10 0-5 2-10 0" fill="#f3c9cb" />
    </svg>
  ),
};

const MapInfoMark = () => (
  <svg width="14" height="15" viewBox="0 0 14 15" aria-hidden="true">
    <path d="M1 1h10l2 2v11H3l-2-2z" fill="#e9dfd8" stroke="#9c5a33" strokeWidth="1.600" />
    <path d="M4 11q1-5 7-5M7 12q1-3 4-3" fill="none" stroke="#c9683a" strokeWidth="1.400" />
  </svg>
);

export default function App() {
  return (
    <Shell>
      <GlobalStyle />
      <TitleBar>
        <AppName><MapInfoMark />MapInfo Professional</AppName>
        <FrameButtons>
          <FrameButton aria-label="Minimize"><svg width="12" height="10"><rect x="1" y="5" width="9" height="3" fill="#fff" /></svg></FrameButton>
          <FrameButton aria-label="Restore">
            <svg width="12" height="12" viewBox="0 0 12 12"><path d="M4 4V2h6v6H8M2 4h6v6H2z" fill="none" stroke="#fff" strokeWidth="1.600" /></svg>
          </FrameButton>
          <FrameButton $danger aria-label="Close">
            <svg width="12" height="12" viewBox="0 0 12 12"><path d="M2 2l8 8M10 2l-8 8" stroke="#fff" strokeWidth="2.400" /></svg>
          </FrameButton>
        </FrameButtons>
      </TitleBar>
      <MenuBar>
        <Grip />
        {menus.map((m) => <MenuItem key={m}>{m}</MenuItem>)}
      </MenuBar>
      <ToolArea>
        {toolRows.map((row, r) => (
          <ToolRow key={r}>
            {row.map((group, g) => (
              <ToolGroup key={g}>
                <Grip />
                {group.split(" ").map((n, i) =>
                  n === "|" ? <ToolSep key={i} /> : (
                    <ToolButton key={i} aria-label={n} $active={n === "select"}><Icon name={n} /></ToolButton>
                  )
                )}
              </ToolGroup>
            ))}
          </ToolRow>
        ))}
      </ToolArea>
      <Body>
        <SideStrip><SideTab>Layer Control</SideTab></SideStrip>
        <Workspace>
          <Win $at={{ x: 0, y: 0, w: 418, h: 284 }}>
            <WinHeader map title="buffer1000mDONA,...,AGEBS_ZMVM Map" />
            <MapPane><StreetMap /></MapPane>
          </Win>
          <BrowserWindow title="buffer500mDONA Browser" at={{ x: 77, y: 187, w: 371, h: 239 }}
            values={["2,952", "10,169", "10,579", "14,796", "13,567", "12,824", "10,844"]} />
          <BrowserWindow title="buffer500m Browser" at={{ x: 237, y: 240, w: 371, h: 247 }}
            values={["2,952", "10,169", "10,579", "14,796", "13,567", "12,824", "10,844"]} />
          <BrowserWindow title="buffer1000m Browser" at={{ x: 462, y: 64, w: 282, h: 246 }}
            values={["22,968", "44,727", "46,352", "67,851", "53,497", "54,030", "45,188"]} />
          <BrowserWindow title="buffer1000mDONA Browser" at={{ x: 750, y: 62, w: 293, h: 246 }}
            values={["20,016", "34,558", "53,055", "39,930", "41,098", "35,773", "34,264"]} />
          <BrowserWindow title="buffer2000m Browser" at={{ x: 482, y: 285, w: 249, h: 248 }}
            values={["111,591", "173,243", "188,193", "287,302", "226,385", "232,298", "205,851"]} />
          <BrowserWindow active title="buffer2000mDONA Browser" at={{ x: 726, y: 280, w: 321, h: 253 }}
            values={["88,623", "114,081", "219,451", "172,888", "152,349", "129,686", "127,841"]} />
        </Workspace>
      </Body>
      <StatusBar><StatusText>records 1 - 7 of 7</StatusText></StatusBar>
      <Taskbar>
        <StartButton aria-label="Start">{taskIcons.start}</StartButton>
        <TaskButton $look="open" aria-label="Explorer">{taskIcons.explorer}</TaskButton>
        <TaskButton $look="bare" aria-label="Chrome">{taskIcons.chrome}</TaskButton>
        <TaskButton $look="open" aria-label="Spotify">{taskIcons.music}</TaskButton>
        <TaskButton $look="front" aria-label="MapInfo">{taskIcons.mapinfo}</TaskButton>
        <TaskButton $look="open" aria-label="Recorder">{taskIcons.recorder}</TaskButton>
        <Tray>
          <Language>ES</Language>
          <TrayButton aria-label="Show hidden icons"><svg width="8" height="5" viewBox="0 0 8 5"><path d="M0 5l4-4 4 4z" fill="#eee" /></svg></TrayButton>
          <TrayButton aria-label="Action center">
            <svg width="14" height="14" viewBox="0 0 14 14"><path d="M2 1v13" stroke="#fff" strokeWidth="1.500" /><path d="M3 2h5l1 2 4-1-1 4-3 1-1-1H3z" fill="#fff" /></svg>
          </TrayButton>
          <TrayButton aria-label="Power">
            <svg width="14" height="15" viewBox="0 0 14 15"><path d="M2 3h7v11H2zM4 1h3v2H4z" fill="none" stroke="#fff" strokeWidth="1.500" /><path d="M6 5h8v3q0 2-2 2h-2v4H9v-4Q6 10 6 8z" fill="#eee" /><path d="M8 3v3M12 3v3" stroke="#fff" /></svg>
          </TrayButton>
          <TrayButton aria-label="Network">
            <svg width="14" height="12" viewBox="0 0 14 12"><path d="M1 12V9M4 12V8M7 12V6M10 12V3M13 12V0" stroke="#fff" strokeWidth="2" /></svg>
          </TrayButton>
          <TrayButton aria-label="Volume">
            <svg width="14" height="14" viewBox="0 0 14 14"><path d="M1 5h2l4-4v12L3 9H1z" fill="#fff" /><path d="M9 4q2 3 0 6M11 2q4 5 0 10" fill="none" stroke="#ccc" /></svg>
          </TrayButton>
          <TrayButton aria-label="Dropbox">
            <svg width="15" height="15" viewBox="0 0 15 15"><path d="M4 1l3 2-3 3-3-2zM11 1l3 3-3 2-3-3zM4 6l3 3-3 2-3-3zM11 6l3 2-3 3-3-2zM7 10l4 2-4 3-3-3zM7 3l4 3-4 3-3-3z" fill="#8fd0f5" /><circle cx="11" cy="11" r="3" fill="#3fa535" /></svg>
          </TrayButton>
          <Clock>11:52 p.m.<br />18/03/2014</Clock>
          <ShowDesktop aria-label="Show desktop" />
        </Tray>
      </Taskbar>
    </Shell>
  );
}
